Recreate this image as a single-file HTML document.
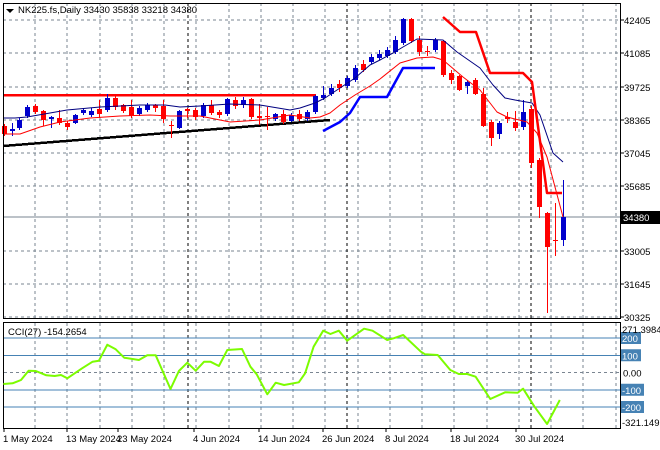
<!DOCTYPE html>
<html><head><meta charset="utf-8">
<style>
html,body{margin:0;padding:0;background:#fff;}
svg{display:block;font-family:"Liberation Sans",sans-serif;}
</style></head><body>
<svg id="s" width="660" height="450" xmlns="http://www.w3.org/2000/svg"></svg>
<script>
var s='';
function L(x1,y1,x2,y2,c,w,d){s+='<line x1="'+x1+'" y1="'+y1+'" x2="'+x2+'" y2="'+y2+'" stroke="'+c+'" stroke-width="'+(w||1)+'"'+(d?' stroke-dasharray="'+d+'"':'')+' shape-rendering="crispEdges"/>';}
function P(pts,c,w){s+='<polyline points="'+pts.map(function(p){return p[0]+','+p[1]}).join(' ')+'" fill="none" stroke="'+c+'" stroke-width="'+w+'" stroke-linejoin="round"/>';}
function T(x,y,t,c,sz,a){s+='<text x="'+x+'" y="'+y+'" fill="'+(c||'#000')+'" font-size="'+(sz||9.5)+'"'+(a?' text-anchor="'+a+'"':'')+'>'+t+'</text>';}
var G='#7a8591';
var vx=[];for(var k=0;k<19;k++)vx.push(Math.round(35+32.25*k));
var hy=[20,53,87,120,153,186,251,284,317];
hy.forEach(function(y){L(3,y,620,y,G,1,'3,3');});
vx.forEach(function(x){if(x<620){L(x,3,x,318,G,1,'3,3');L(x,323,x,428,G,1,'3,3');}});
[188,347,531].forEach(function(x){L(x,3,x,318,'#000',1,'3,3');L(x,323,x,428,'#000',1,'3,3');});
L(3,217,620,217,'#7a8591',1);
L(3,95,316,95,'#ff0000',2.5);
L(3,146,330,120,'#000',2.5);
var C=[[4,'r',126,134,124,136],[12,'b',129,131,123,136],[19,'b',120,128,118,130],[27,'b',107,116,105,118],[35,'r',106,112,104,114],[43,'r',111,120,110,126],[51,'b',117,119,116,128],[59,'r',118,123,110,125],[67,'r',123,127,121,130],[75,'b',115,123,114,124],[83,'b',110,113,108,115],[91,'b',111,115,108,117],[99,'r',109,114,100,118],[107,'b',98,110,94,112],[115,'r',98,107,96,110],[123,'r',105,111,104,113],[131,'r',107,116,100,118],[139,'b',108,114,106,116],[147,'b',105,110,103,112],[155,'r',105,108,104,112],[163,'r',106,119,100,123],[171,'r',125,126,121,138],[179,'b',111,128,110,129],[187,'r',109,111,108,118],[195,'r',110,117,108,120],[203,'b',105,116,103,118],[211,'r',105,113,100,115],[219,'r',112,115,110,118],[227,'b',99,114,98,116],[235,'r',100,106,97,109],[243,'b',100,105,97,108],[251,'r',99,117,98,119],[259,'r',116,118,104,125],[267,'r',116,117,107,130],[275,'b',114,119,113,121],[283,'r',114,122,110,124],[291,'b',115,121,113,122],[299,'r',114,119,110,121],[307,'b',112,119,110,121],[315,'b',96,112,95,114],[323,'b',95,98,86,100],[331,'b',88,94,84,96],[339,'r',84,88,80,92],[347,'b',78,86,76,88],[355,'b',68,80,65,82],[363,'r',64,70,60,72],[371,'b',57,62,54,64],[379,'b',54,58,50,60],[387,'b',50,56,47,58],[395,'b',40,52,36,54],[403,'b',19,43,18,45],[411,'r',19,41,18,43],[419,'r',40,52,36,56],[427,'r',51,52,46,56],[435,'b',40,50,38,52],[443,'r',41,75,40,77],[451,'r',73,80,70,84],[459,'r',76,90,75,91],[467,'b',82,86,80,94],[475,'r',80,94,78,95],[483,'r',94,126,88,127],[491,'r',122,138,120,146],[499,'b',123,134,121,139],[507,'r',117,119,112,123],[515,'r',122,128,111,131],[523,'b',112,127,100,130],[531,'r',109,163,106,168],[539,'r',160,207,158,218],[547,'r',213,247,212,313],[555,'r',240,241,203,256],[563,'b',217,240,180,246]];
C.forEach(function(c){var col=c[1]=='r'?'#ff0000':'#0000cc';var x=c[0];
L(x+0.5,c[4],x+0.5,c[5],col,1);
var h=Math.max(1,c[3]-c[2]);s+='<rect x="'+(x-2)+'" y="'+c[2]+'" width="5" height="'+h+'" fill="'+col+'"/>';});
P([[3,118],[15,118],[27,117],[50,113],[67,110],[100,107],[140,105],[165,105],[180,107],[200,106],[230,104],[260,105],[290,110],[300,108],[315,103],[325,98],[340,88],[355,78],[370,65],[380,60],[393,53],[403,47],[417,39],[443,40],[457,52],[480,68],[493,85],[505,98],[515,100],[532,103],[540,115],[553,153],[563,162]],'#000080',1);
P([[3,134],[20,134],[40,127],[60,122],[90,118],[120,116],[150,115],[170,116],[200,116],[230,122],[260,120],[290,115],[310,118],[320,117],[330,113],[340,105],[355,95],[370,86],[380,79],[400,63],[417,58],[433,57],[443,60],[463,77],[480,90],[497,112],[507,117],[527,122],[537,133],[547,157],[563,217]],'#ff0000',1);
P([[323,131],[340,122],[350,113],[360,97],[387,97],[403,68],[435,68]],'#0000ff',2.5);
P([[443,17],[460,32],[476,32],[490,73],[523,73],[532,82],[547,193],[562,193]],'#ff0000',2.5);
s+='<rect x="3.5" y="3.5" width="617" height="315" fill="none" stroke="#000" shape-rendering="crispEdges"/>';
s+='<rect x="3.5" y="322.5" width="617" height="106" fill="none" stroke="#000" shape-rendering="crispEdges"/>';
var lab=[[20,'42405'],[53,'41085'],[87,'39725'],[120,'38365'],[153,'37045'],[186,'35685'],[251,'33005'],[284,'31645'],[317,'30325']];
lab.forEach(function(l){L(620,l[0],624,l[0],'#000',1);T(624,l[0]+4,l[1],'#000',9.5);});
s+='<rect x="621" y="211" width="39" height="13" fill="#000"/>';T(623,221,'34380','#fff',9.5);
s+='<path d="M6 9 L14 9 L10 13 Z" fill="#000"/>';
T(18,13,'NK225.fs,Daily  33430 35838 33218 34380','#000',9.5);
var cy=function(v){return 372.5-v*0.1725;};
[200,100,-100,-200].forEach(function(v){L(4,cy(v),620,cy(v),'#4682b4',1);});
L(4,cy(0),620,cy(0),G,1,'3,3');
var cc=[[8,222],[30,220],[50,210],[68,182],[85,183],[110,196],[130,198],[145,195],[160,205],[195,175],[220,155],[235,152],[255,104],[275,118],[295,143],[330,150],[350,136],[370,136],[405,237],[425,183],[445,158],[465,182],[485,155],[500,155],[520,168],[540,120],[575,117],[595,170],[610,193],[635,253],[655,218],[675,225],[710,217],[725,190],[745,110],[768,62],[785,72],[805,62],[825,92],[865,56],[885,62],[920,90],[935,85],[958,75],[1000,125],[1010,133],[1040,135],[1070,180],[1090,192],[1110,192],[1130,200],[1165,267],[1200,247],[1230,248],[1243,236],[1270,290],[1300,342],[1330,270]].map(function(p){return [(p[0]/2.376).toFixed(1),(310+p[1]/3).toFixed(1)];});
P(cc,'#7cfc00',2);
T(8,335,'CCI(27) -154.2654','#000',9.5);
[[200,'200'],[100,'100'],[0,'0.00'],[-100,'-100'],[-200,'-200']].forEach(function(v){var y=cy(v[0]);
if(v[0]!=0){var w=v[0]<0?23:20;s+='<rect x="621" y="'+(y-6)+'" width="'+w+'" height="12" fill="#4682b4"/>';T(622,y+4,v[1],'#fff',9.5);}else T(623,y+4,v[1],'#000',9.5);});
T(622,333,'271.3984','#000',9.5);T(622,426,'-321.149','#000',9.5);
[[3,'1 May 2024'],[66,'13 May 2024'],[117,'23 May 2024'],[193,'4 Jun 2024'],[258,'14 Jun 2024'],[322,'26 Jun 2024'],[385,'8 Jul 2024'],[450,'18 Jul 2024'],[515,'30 Jul 2024']].forEach(function(t){L(t[0]+1,428,t[0]+1,432,'#000',1);T(t[0],442,t[1],'#000',9.5);});
document.getElementById('s').innerHTML=s;
</script>
</body></html>
